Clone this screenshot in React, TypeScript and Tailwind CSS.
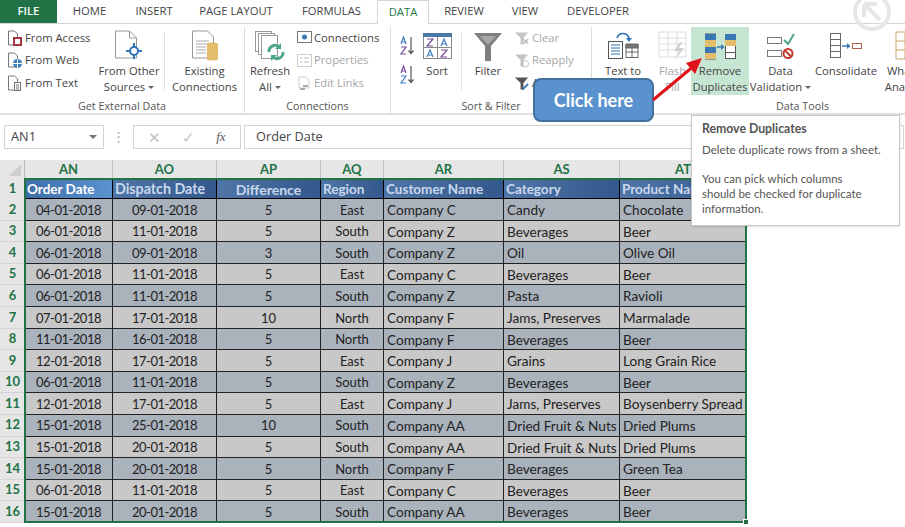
import type { ReactNode } from "react";

const tabs = [
  { label: "HOME", w: "w-[65px]" },
  { label: "INSERT", w: "w-[64px]" },
  { label: "PAGE LAYOUT", w: "w-[100px]" },
  { label: "FORMULAS", w: "w-[91px]" },
];

const tabsRight = [
  { label: "REVIEW", w: "w-[70px]" },
  { label: "VIEW", w: "w-[52px]" },
  { label: "DEVELOPER", w: "w-[94px]" },
];

const rows = [
  ["04-01-2018", "09-01-2018", "5", "East", "Company C", "Candy", "Chocolate"],
  ["06-01-2018", "11-01-2018", "5", "South", "Company Z", "Beverages", "Beer"],
  ["06-01-2018", "09-01-2018", "3", "South", "Company Z", "Oil", "Olive Oil"],
  ["06-01-2018", "11-01-2018", "5", "East", "Company C", "Beverages", "Beer"],
  ["06-01-2018", "11-01-2018", "5", "South", "Company Z", "Pasta", "Ravioli"],
  ["07-01-2018", "17-01-2018", "10", "North", "Company F", "Jams, Preserves", "Marmalade"],
  ["11-01-2018", "16-01-2018", "5", "North", "Company F", "Beverages", "Beer"],
  ["12-01-2018", "17-01-2018", "5", "East", "Company J", "Grains", "Long Grain Rice"],
  ["06-01-2018", "11-01-2018", "5", "South", "Company Z", "Beverages", "Beer"],
  ["12-01-2018", "17-01-2018", "5", "East", "Company J", "Jams, Preserves", "Boysenberry Spread"],
  ["15-01-2018", "25-01-2018", "10", "South", "Company AA", "Dried Fruit & Nuts", "Dried Plums"],
  ["15-01-2018", "20-01-2018", "5", "South", "Company AA", "Dried Fruit & Nuts", "Dried Plums"],
  ["15-01-2018", "20-01-2018", "5", "North", "Company F", "Beverages", "Green Tea"],
  ["06-01-2018", "11-01-2018", "5", "East", "Company C", "Beverages", "Beer"],
  ["15-01-2018", "20-01-2018", "5", "South", "Company AA", "Beverages", "Beer"],
];

const columns = [
  { name: "AN", head: "Order Date", w: "w-[88px]", cell: "justify-center tracking-[-0.5px] text-[13px]", top: "justify-start text-[13.5px]" },
  { name: "AO", head: "Dispatch Date", w: "w-[104px]", cell: "justify-center tracking-[-0.5px] text-[13px]", top: "justify-start text-[14.25px]" },
  { name: "AP", head: "Difference", w: "w-[104px]", cell: "justify-center text-[13px]", top: "justify-center text-[14px]" },
  { name: "AQ", head: "Region", w: "w-[63px]", cell: "justify-center text-[13px]", top: "justify-start text-[13.5px]" },
  { name: "AR", head: "Customer Name", w: "w-[120px]", cell: "justify-start text-[13.6px]", top: "justify-start text-[13.5px]" },
  { name: "AS", head: "Category", w: "w-[116px]", cell: "justify-start text-[13.6px]", top: "justify-start text-[13.5px]" },
  { name: "AT", head: "Product Name", w: "w-[127px]", cell: "justify-start text-[13.6px]", top: "justify-start text-[13.5px]" },
];

const SmallItem = ({ icon, label, muted }: { icon: ReactNode; label: string; muted?: boolean }) => (
  <div className={`flex h-[22.5px] items-center gap-[2px] whitespace-nowrap ${muted ? "text-[#a6a6a6]" : "text-[#444]"}`}>
    <span className="flex w-[16px] justify-center">{icon}</span>
    {label}
  </div>
);

const Caret = () => (
  <span className="ml-[3px] inline-block h-0 w-0 border-x-[3px] border-t-[3px] border-x-transparent border-t-[#666] align-middle" />
);

const BigButton = ({
  icon,
  lines,
  w,
  caret,
  muted,
  active,
}: {
  icon: ReactNode;
  lines: string[];
  w: string;
  caret?: boolean;
  muted?: boolean;
  active?: boolean;
}) => (
  <div
    className={`flex h-[68px] shrink-0 flex-col items-center pt-[2px] text-center leading-[16px] ${w} ${muted ? "text-[#a6a6a6]" : "text-[#444]"} ${active ? "bg-[#c6e6d3]" : ""}`}
  >
    <div className="flex h-[34px] items-center justify-center">{icon}</div>
    {lines.map((line, i) => (
      <div key={line} className="whitespace-nowrap">
        {line}
        {caret && i === lines.length - 1 && <Caret />}
      </div>
    ))}
  </div>
);

const Sep = () => <div className="my-[5px] h-[58px] w-px shrink-0 bg-[#e1e1e1]" />;

const Group = ({ w, label, children }: { w: string; label: string; children: ReactNode }) => (
  <div className={`flex shrink-0 flex-col border-r border-[#dcdcdc] ${w}`}>
    <div className="flex h-[68px] items-start">{children}</div>
    <div className="pt-[3px] text-center text-[10.75px] leading-[16px] text-[#555]">{label}</div>
  </div>
);

const FromAccess = () => (
  <svg width="16" height="17" viewBox="0 0 16 17" fill="none">
    <path d="M1.5 1h6l3 3v11h-9z" fill="#fff" stroke="#777" />
    <rect x="6" y="7" width="9" height="9" fill="#a4373a" />
    <rect x="8" y="9" width="5" height="5" fill="#fff" />
  </svg>
);
const FromWeb = () => (
  <svg width="16" height="17" viewBox="0 0 16 17" fill="none">
    <path d="M1.5 1h6l3 3v11h-9z" fill="#fff" stroke="#777" />
    <circle cx="10.5" cy="11.5" r="4.5" fill="#3f7fbf" />
    <path d="M6 11.5h9M10.5 7v9" stroke="#fff" />
  </svg>
);
const FromText = () => (
  <svg width="16" height="17" viewBox="0 0 16 17" fill="none">
    <path d="M1.5 1h6l3 3v11h-9z" fill="#fff" stroke="#777" />
    <rect x="7.5" y="7.5" width="6" height="8" fill="#fff" stroke="#777" />
    <path d="M9 10h3M9 12h3M9 14h3" stroke="#777" />
  </svg>
);
const FromOther = () => (
  <svg width="30" height="32" viewBox="0 0 30 32" fill="none">
    <path d="M1.5 1h14l7 7v20h-21z" fill="#fff" stroke="#999" />
    <path d="M15.5 1v7h7" stroke="#999" />
    <circle cx="20" cy="21" r="4" fill="#fff" stroke="#2f75b5" strokeWidth="2" />
    <path d="M20 13v4M20 25v4M12 21h4M24 21h4" stroke="#2f75b5" strokeWidth="2" />
  </svg>
);
const Existing = () => (
  <svg width="28" height="32" viewBox="0 0 28 32" fill="none">
    <path d="M1.5 1h15l6 6v21h-21z" fill="#fff" stroke="#999" />
    <path d="M5 11h13M5 14h13M5 17h10M5 20h10M5 23h10" stroke="#aaa" />
    <path d="M16 14c0-2 11-2 11 0v15c0 2-11 2-11 0z" fill="#e2bd6c" />
  </svg>
);
const Refresh = () => (
  <svg width="32" height="32" viewBox="0 0 32 32" fill="none">
    <rect x="1.5" y="1.5" width="16" height="20" fill="#fff" stroke="#999" />
    <rect x="4.5" y="3.5" width="16" height="21" fill="#fff" stroke="#999" />
    <rect x="7.5" y="5.5" width="16" height="23" fill="#fff" stroke="#999" />
    <path d="M15 22a6 6 0 0 1 10-5M29 22a6 6 0 0 1-10 5" stroke="#4da58a" strokeWidth="3" />
    <path d="M27 13v6h-6zM17 31v-6h6z" fill="#4da58a" />
  </svg>
);
const AZ = ({ flip }: { flip?: boolean }) => (
  <svg width="16" height="20" viewBox="0 0 16 20" fill="none">
    <path d="M2 8l2.5-7L7 8M3 6h3" stroke={flip ? "#7a4f9e" : "#3f7fbf"} strokeWidth="1.2" />
    <path d="M2 11h5l-5 7h5" stroke={flip ? "#3f7fbf" : "#7a4f9e"} strokeWidth="1.2" />
    <path d="M12 1v16M9.5 14.5l2.5 3 2.5-3" stroke="#555" strokeWidth="1.2" />
  </svg>
);
const SortBig = () => (
  <svg width="29" height="26" viewBox="0 0 29 26" fill="none">
    <rect x="0.5" y="0.5" width="28" height="25" fill="#fff" stroke="#8a8a8a" />
    <rect x="0" y="0" width="29" height="4" fill="#4a76a8" />
    <path d="M14.5 4v21M1 14.5h27" stroke="#8a8a8a" />
    <path d="M4 6h6l-6 7h6" stroke="#7a4f9e" strokeWidth="1.2" />
    <path d="M18 13l3-7 3 7M19 11h4" stroke="#3f7fbf" strokeWidth="1.2" />
    <path d="M4 24l3-7 3 7M5 22h4" stroke="#3f7fbf" strokeWidth="1.2" />
    <path d="M18 17h6l-6 7h6" stroke="#7a4f9e" strokeWidth="1.2" />
  </svg>
);
const Funnel = () => (
  <svg width="28" height="29" viewBox="0 0 28 29">
    <path d="M0 1h28L17 14v15h-6V14z" fill="#7f7f7f" />
    <path d="M6 4h16l-7 8h-2z" fill="#a8a8a8" />
  </svg>
);
const MiniFunnel = ({ color = "#c4c4c4", children }: { color?: string; children?: ReactNode }) => (
  <svg width="17" height="17" viewBox="0 0 17 17" fill="none">
    <path d="M1 2h14L10 8v7H7V8z" fill={color} />
    {children}
  </svg>
);
const TextToColumns = () => (
  <svg width="32" height="32" viewBox="0 0 32 32" fill="none">
    <path d="M10 8c2-6 10-6 12 0" stroke="#2f75b5" strokeWidth="1.6" />
    <path d="M19 8h6l-3 4z" fill="#2f75b5" />
    <rect x="1.5" y="11.5" width="14" height="17" fill="#fff" stroke="#555" />
    <path d="M4 15h9M4 18h9M4 21h9M4 24h9" stroke="#2f75b5" />
    <rect x="19" y="14.5" width="12" height="13" fill="#fff" stroke="#666" />
    <path d="M19 14h12v4H19zM25 18v9M19 22h12" fill="#777" stroke="#666" />
  </svg>
);
const Flash = () => (
  <svg width="30" height="30" viewBox="0 0 30 30" fill="none">
    <path d="M1 1h27v25H1zM1 7h27M1 13h27M1 19h27M10 1v25M19 1v25" stroke="#ddd" />
    <path d="M22 11l-6 9h5l-3 8 8-11h-5l3-6z" fill="#cfcfcf" />
  </svg>
);
const Duplicates = () => (
  <svg width="32" height="27" viewBox="0 0 32 27" fill="none">
    <rect x="1.5" y="1" width="10" height="25" fill="#fff" stroke="#555" />
    <rect x="1" y="1" width="11" height="6" fill="#3a78b5" />
    <rect x="1" y="7" width="11" height="7" fill="#e2bd6c" />
    <rect x="1" y="14" width="11" height="6" fill="#3a78b5" />
    <rect x="1" y="20" width="11" height="6" fill="#e2bd6c" />
    <path d="M13 14h5" stroke="#3a78b5" strokeWidth="1.5" />
    <path d="M17 11l3.5 3-3.5 3z" fill="#3a78b5" />
    <rect x="21.5" y="1.5" width="10" height="24" fill="#fff" stroke="#555" />
    <rect x="21" y="1" width="11" height="6" fill="#3a78b5" />
    <rect x="21" y="7" width="11" height="6" fill="#e2bd6c" />
    <path d="M22 19.500h9" stroke="#555" />
  </svg>
);
const Validation = () => (
  <svg width="28" height="27" viewBox="0 0 28 27" fill="none">
    <rect x="0.5" y="4.500" width="14" height="6" fill="#fff" stroke="#777" />
    <rect x="0.5" y="17.500" width="14" height="6" fill="#fff" stroke="#777" />
    <path d="M17 7l4 4 6-10" stroke="#4da58a" strokeWidth="2" />
    <circle cx="21" cy="20.500" r="4.500" stroke="#c0392b" strokeWidth="2" />
    <path d="M18 17.500l6 6" stroke="#c0392b" strokeWidth="2" />
  </svg>
);
const Consolidate = () => (
  <svg width="32" height="26" viewBox="0 0 32 26" fill="none">
    <rect x="0.5" y="0.500" width="10" height="24" fill="#fff" stroke="#666" />
    <path d="M1 6.500h9M1 12.500h9M1 18.500h9" stroke="#666" />
    <path d="M12 13h6" stroke="#3a78b5" strokeWidth="1.5" />
    <path d="M17 10l3.500 3-3.500 3z" fill="#3a78b5" />
    <rect x="22.500" y="10.500" width="9" height="5" fill="#fff" stroke="#b0634a" />
  </svg>
);
const WhatIf = () => (
  <svg width="22" height="30" viewBox="0 0 22 30" fill="none">
    <path d="M1 1h20v27H1zM1 10h20M1 19h20M10 1v27" stroke="#c9a66b" />
  </svg>
);

const App = () => {
  return (
    <div className="relative h-[527px] w-[905px] overflow-hidden bg-white font-['Open_Sans',sans-serif] text-[11.25px] text-[#444]">
      {/* tab strip */}
      <div className="flex h-[24px] items-stretch border-b border-[#d4d4d4] text-[#444]">
        <div className="flex w-[57px] items-center justify-center bg-[#217346] font-semibold text-white">FILE</div>
        {tabs.map((t) => (
          <div key={t.label} className={`flex items-center justify-center ${t.w}`}>
            {t.label}
          </div>
        ))}
        <div className="-mb-px flex w-[52px] items-center justify-center border-x border-t border-x-[#d4d4d4] border-t-[#d4d4d4] bg-white text-[#217346]">
          DATA
        </div>
        {tabsRight.map((t) => (
          <div key={t.label} className={`flex items-center justify-center ${t.w}`}>
            {t.label}
          </div>
        ))}
      </div>

      {/* ribbon */}
      <div className="flex h-[91px] border-b-2 border-[#e1e1e1] pt-[3px]">
        <Group w="w-[245px]" label="Get External Data">
          <div className="flex w-[102px] flex-col pl-[7px]">
            <SmallItem icon={<FromAccess />} label="From Access" />
            <SmallItem icon={<FromWeb />} label="From Web" />
            <SmallItem icon={<FromText />} label="From Text" />
          </div>
          <BigButton w="w-[54px]" caret icon={<FromOther />} lines={["From Other", "Sources"]} />
          <div className="w-[8px]" />
          <Sep />
          <BigButton w="w-[79px]" icon={<Existing />} lines={["Existing", "Connections"]} />
        </Group>
        <Group w="w-[146px]" label="Connections">
          <BigButton w="w-[50px]" caret icon={<Refresh />} lines={["Refresh", "All"]} />
          <div className="flex flex-col pl-[1px]">
            <SmallItem
              icon={
                <svg width="15" height="14" viewBox="0 0 15 14" fill="none">
                  <rect x="0.5" y="0.5" width="14" height="11" stroke="#777" />
                  <circle cx="7.500" cy="6" r="2.500" fill="#3a78b5" />
                </svg>
              }
              label="Connections"
            />
            <SmallItem
              muted
              icon={
                <svg width="15" height="14" viewBox="0 0 15 14" fill="none">
                  <rect x="0.5" y="0.5" width="14" height="12" stroke="#ccc" />
                  <path d="M3 4h2M7 4h5M3 8h2M7 8h5" stroke="#bbb" />
                </svg>
              }
              label="Properties"
            />
            <SmallItem
              muted
              icon={
                <svg width="15" height="15" viewBox="0 0 15 15" fill="none">
                  <path d="M2 1h7l3 3v8H2z" stroke="#ccc" />
                  <path d="M3 13h5M6 10h5" stroke="#aaa" strokeWidth="2" />
                </svg>
              }
              label="Edit Links"
            />
          </div>
        </Group>
        <Group w="w-[201px]" label="Sort & Filter">
          <div className="flex w-[24px] flex-col items-center gap-[9px] pl-[7px] pt-[9px]">
            <AZ />
            <AZ flip />
          </div>
          <BigButton w="w-[44px]" icon={<SortBig />} lines={["Sort"]} />
          <div className="w-[2px]" />
          <Sep />
          <BigButton w="w-[52px]" icon={<Funnel />} lines={["Filter"]} />
          <div className="flex flex-col">
            <SmallItem
              muted
              icon={
                <MiniFunnel>
                  <path d="M10 9l5 5M15 9l-5 5" stroke="#bbb" strokeWidth="1.500" />
                </MiniFunnel>
              }
              label="Clear"
            />
            <SmallItem
              muted
              icon={
                <MiniFunnel>
                  <circle cx="12" cy="12" r="3.500" stroke="#bbb" />
                </MiniFunnel>
              }
              label="Reapply"
            />
            <SmallItem
              icon={
                <MiniFunnel color="#555">
                  <path d="M9 15l6-6" stroke="#3a78b5" strokeWidth="2" />
                </MiniFunnel>
              }
              label="Advanced"
            />
          </div>
        </Group>
        <div className="flex shrink-0 flex-col">
          <div className="flex h-[68px] items-start">
            <BigButton w="w-[62px]" icon={<TextToColumns />} lines={["Text to", "Columns"]} />
            <BigButton w="w-[37px]" muted icon={<Flash />} lines={["Flash", "Fill"]} />
            <BigButton w="w-[58px]" active icon={<Duplicates />} lines={["Remove", "Duplicates"]} />
            <BigButton w="w-[63px]" caret icon={<Validation />} lines={["Data", "Validation"]} />
            <BigButton w="w-[68px]" icon={<Consolidate />} lines={["Consolidate"]} />
            <BigButton w="w-[52px]" icon={<WhatIf />} lines={["What-If", "Analysis"]} />
          </div>
          <div className="pl-[184px] pt-[3px] text-[10.75px] leading-[16px] text-[#555]">Data Tools</div>
        </div>
      </div>

      {/* formula bar */}
      <div className="mt-[10px] flex h-[24px] items-stretch text-[12.75px] text-[#444]">
        <div className="ml-[4px] flex w-[100px] items-center justify-between border border-[#d4d4d4] pl-[6px] pr-[6px]">
          AN1
          <span className="h-0 w-0 border-x-[4px] border-t-[4px] border-x-transparent border-t-[#777]" />
        </div>
        <div className="flex w-[29px] items-center justify-center text-[#aaa]">⋮</div>
        <div className="flex w-[108px] items-center justify-around border border-[#d4d4d4] px-[4px] text-[15px] text-[#c4c4c4]">
          <span>✕</span>
          <span>✓</span>
          <span className="font-['Liberation_Serif',serif] text-[13px] italic text-[#555]">fx</span>
        </div>
        <div className="ml-[3px] flex w-[660px] items-center border border-[#d4d4d4] pl-[11px]">Order Date</div>
      </div>

      {/* grid */}
      <div className="relative mt-[11px] w-[749px] font-['Lato',sans-serif] text-[13px] text-[#222]">
        <div className="flex h-[19px]">
          <div className="w-[25px] border-r border-[#bbb] bg-[#e6e6e6]">
            <div className="ml-[9px] mt-[4px] h-0 w-0 border-b-[12px] border-l-[12px] border-b-[#cfcfcf] border-l-transparent" />
          </div>
          {columns.map((c) => (
            <div
              key={c.name}
              className={`flex items-center justify-center border-r border-[#c4c4c4] bg-[#e6e6e6] font-bold text-[#217346] ${c.w}`}
            >
              {c.name}
            </div>
          ))}
        </div>

        <div className="flex h-[20px]">
          <div className="flex w-[25px] items-center justify-center bg-[#e6e6e6] font-bold text-[#217346]">1</div>
          {columns.map((c, i) => (
            <div
              key={c.name}
              className={`flex items-center overflow-hidden whitespace-nowrap border-r border-b border-black px-[2px] pt-[2px] font-bold leading-none ${c.w} ${c.top} ${i === 0 ? "bg-gradient-to-r from-[#3f6fa8] to-[#5b92d0] text-white" : "bg-gradient-to-r from-[#5076a8] to-[#33598c] text-[#c9d8ec]"}`}
            >
              {c.head}
            </div>
          ))}
        </div>

        {rows.map((row, r) => (
          <div key={r} className="flex h-[21.6px]">
            <div className="flex w-[25px] items-center justify-center border-b border-[#d4d4d4] bg-[#e6e6e6] font-bold text-[#217346]">
              {r + 2}
            </div>
            {row.map((cell, i) => (
              <div
                key={i}
                className={`flex items-center whitespace-nowrap border-r border-b border-[#222] px-[3px] pt-[2px] ${columns[i].w} ${columns[i].cell} ${r % 2 === 0 ? "bg-[#aab2bc]" : "bg-[#c8c8c8]"}`}
              >
                {cell}
              </div>
            ))}
          </div>
        ))}

        {/* selection outline */}
        <div className="pointer-events-none absolute left-[24px] top-[18px] h-[345px] w-[723px] border-2 border-[#217346]" />
        <div className="absolute left-[743px] top-[359px] h-[6px] w-[6px] border border-white bg-[#217346]" />
      </div>

      {/* collapse marker */}
      <svg className="absolute left-[852px] top-[-8px]" width="40" height="40" viewBox="0 0 40 40" fill="none">
        <circle cx="20" cy="20" r="17" stroke="#e6e6e6" strokeWidth="4" />
        <path d="M12 12h13M12 12v13M12 12l16 16" stroke="#e6e6e6" strokeWidth="4" />
      </svg>

      {/* callout */}
      <div className="absolute left-[533px] top-[78px] flex h-[44px] w-[121px] items-center justify-center rounded-[8px] border-2 border-[#41719c] bg-[#5a92cf] font-['Lato',sans-serif] text-[18px] font-bold text-white">
        Click here
      </div>
      <svg className="absolute left-[650px] top-[55px]" width="56" height="48" viewBox="0 0 56 48" fill="none">
        <path d="M3 45L45 10" stroke="#e0121a" strokeWidth="3" />
        <path d="M52 3L36 8l9 11z" fill="#e0121a" />
      </svg>

      {/* tooltip */}
      <div className="absolute left-[691px] top-[115px] h-[111px] w-[209px] border border-[#c8c8c8] bg-white pl-[10px] pt-[4.5px] font-['Lato',sans-serif] text-[11.5px] leading-[15px] text-[#555] shadow-sm">
        <div className="text-[12.25px] font-bold">Remove Duplicates</div>
        <div className="mt-[6px]">Delete duplicate rows from a sheet.</div>
        <div className="mt-[14px]">
          You can pick which columns
          <br />
          should be checked for duplicate
          <br />
          information.
        </div>
      </div>
    </div>
  );
};

export default App;
